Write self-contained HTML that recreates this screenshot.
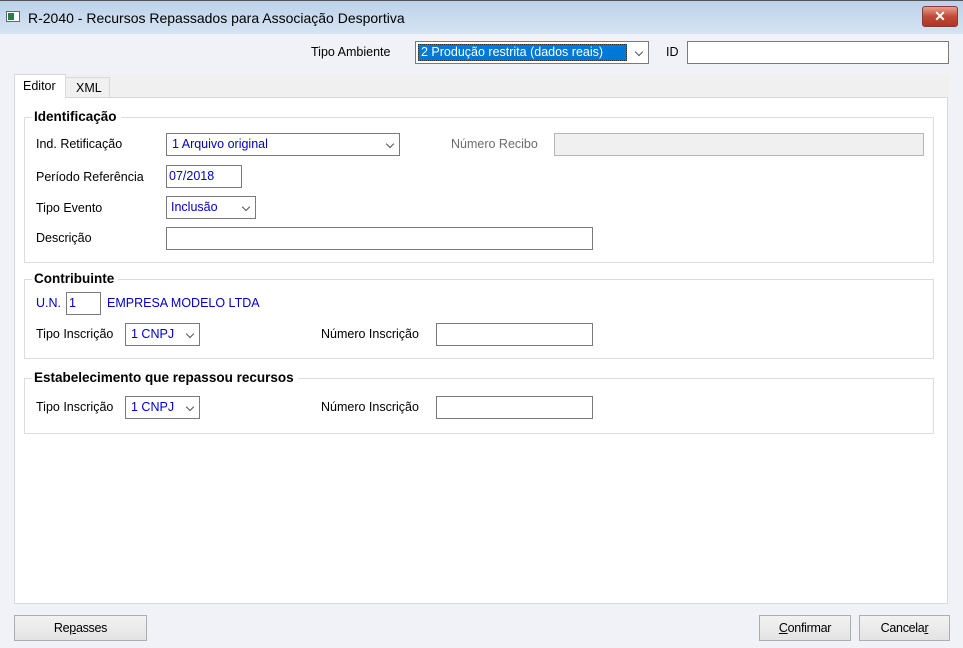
<!DOCTYPE html>
<html><head><meta charset="utf-8"><style>
*{box-sizing:border-box;margin:0;padding:0}
body{width:963px;height:648px;overflow:hidden;background:#f0f2f8;font-family:"Liberation Sans",sans-serif;font-size:12.5px;color:#000;position:relative}
.a{position:absolute;white-space:nowrap}
.t{position:absolute;line-height:14px;transform:translateY(-7px);white-space:nowrap}
.in{position:absolute;background:#fff;border:1px solid #7a7a7a}
.sel{position:absolute;background:#fff;border:1px solid #7a7a7a}
.sel .v{position:absolute;left:5px;top:3px;color:#0000c8}
.sel .ar{position:absolute;right:6px;top:7px;width:6px;height:6px;border-right:1px solid #555;border-bottom:1px solid #555;transform:rotate(45deg)}
.grp{position:absolute;border:1px solid #dcdcdc}
.gt{position:absolute;background:#fff;font-weight:bold;padding:0 4px 0 2px;line-height:15px;font-size:13.5px}
.btn{position:absolute;background:linear-gradient(#f2f2f2,#e3e3e3);border:1px solid #adadad;text-align:center;line-height:24px;letter-spacing:-0.3px}
</style></head><body>
<div class="a" style="left:0;top:0;width:963px;height:34px;background:linear-gradient(#bcd2ea,#d6e4f3);border-top:1px solid #555"></div>
<div class="a" style="left:6px;top:11px;width:14px;height:11px;background:#fff;border:1px solid #666"><div style="position:absolute;left:1px;top:1px;width:6px;height:7px;background:#2a7a4a"></div></div>
<div class="t" style="left:28px;top:18px;font-size:14px">R-2040 - Recursos Repassados para Associação Desportiva</div>
<div class="a" style="left:922px;top:6px;width:36px;height:21px;border-radius:3px;border:1px solid #8a3a30;background:linear-gradient(#e8a090,#c24a38 50%,#b03525);color:#fff;font-weight:bold;text-align:center;line-height:19px;font-size:14px">✕</div>
<div class="t" style="left:311px;top:52px">Tipo Ambiente</div>
<div class="sel" style="left:415px;top:41px;width:234px;height:23px"><div class="a" style="left:2px;top:2px;width:209px;height:17px;background:#0078d7;border:1px dotted #333;color:#fff;padding-left:2px;line-height:15px">2 Produção restrita (dados reais)</div><div class="ar"></div></div>
<div class="t" style="left:666px;top:52px">ID</div>
<div class="in" style="left:687px;top:41px;width:262px;height:23px"></div>
<div class="a" style="left:14px;top:74px;width:936px;height:23px;background:#f0f0f0"></div>
<div class="a" style="left:14px;top:74px;width:52px;height:24px;background:#fff;border:1px solid #d9d9d9;border-bottom:none;z-index:2"></div>
<div class="t" style="left:23px;top:86px;z-index:3">Editor</div>
<div class="a" style="left:65px;top:77px;width:45px;height:20px;background:#f0f0f0;border:1px solid #d9d9d9;border-bottom:none"></div>
<div class="t" style="left:76px;top:88px">XML</div>
<div class="a" style="left:14px;top:97px;width:934px;height:507px;background:#fff;border:1px solid #d9d9d9"></div>
<div class="grp" style="left:24px;top:117px;width:910px;height:146px"></div>
<div class="gt" style="left:32px;top:109px">Identificação</div>
<div class="t" style="left:36px;top:144px">Ind. Retificação</div>
<div class="sel" style="left:166px;top:133px;width:234px;height:23px"><div class="v">1 Arquivo original</div><div class="ar"></div></div>
<div class="t" style="left:451px;top:144px;color:#6d6d6d">Número Recibo</div>
<div class="in" style="left:554px;top:133px;width:370px;height:23px;background:#f0f0f0;border-color:#b5b5b5"></div>
<div class="t" style="left:36px;top:177px">Período Referência</div>
<div class="sel" style="left:166px;top:165px;width:76px;height:23px"><div class="v" style="left:2px">07/2018</div></div>
<div class="t" style="left:36px;top:208px">Tipo Evento</div>
<div class="sel" style="left:166px;top:196px;width:90px;height:23px"><div class="v" style="left:4px">Inclusão</div><div class="ar"></div></div>
<div class="t" style="left:36px;top:238px">Descrição</div>
<div class="in" style="left:166px;top:227px;width:427px;height:23px"></div>
<div class="grp" style="left:24px;top:279px;width:910px;height:80px"></div>
<div class="gt" style="left:32px;top:271px">Contribuinte</div>
<div class="t" style="left:36px;top:303px;color:#0000c8">U.N.</div>
<div class="sel" style="left:66px;top:292px;width:35px;height:23px"><div class="v" style="left:2px">1</div></div>
<div class="t" style="left:107px;top:303px;color:#0000c8">EMPRESA MODELO LTDA</div>
<div class="t" style="left:36px;top:334px">Tipo Inscrição</div>
<div class="sel" style="left:125px;top:323px;width:75px;height:23px"><div class="v">1 CNPJ</div><div class="ar"></div></div>
<div class="t" style="left:321px;top:334px">Número Inscrição</div>
<div class="in" style="left:436px;top:323px;width:157px;height:23px"></div>
<div class="grp" style="left:24px;top:378px;width:910px;height:56px"></div>
<div class="gt" style="left:32px;top:370px">Estabelecimento que repassou recursos</div>
<div class="t" style="left:36px;top:407px">Tipo Inscrição</div>
<div class="sel" style="left:125px;top:396px;width:75px;height:23px"><div class="v">1 CNPJ</div><div class="ar"></div></div>
<div class="t" style="left:321px;top:407px">Número Inscrição</div>
<div class="in" style="left:436px;top:396px;width:157px;height:23px"></div>
<div class="btn" style="left:14px;top:615px;width:133px;height:26px">Re<u>p</u>asses</div>
<div class="btn" style="left:759px;top:615px;width:92px;height:26px"><u>C</u>onfirmar</div>
<div class="btn" style="left:859px;top:615px;width:91px;height:26px">Cancela<u>r</u></div>
</body></html>
